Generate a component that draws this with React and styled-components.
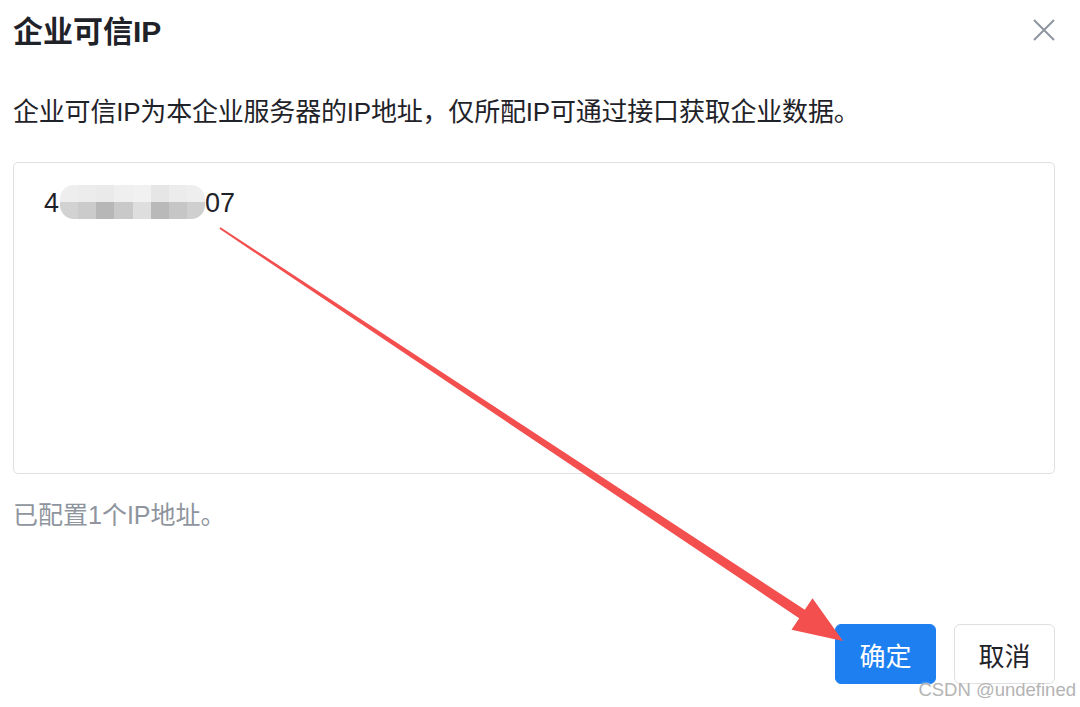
import React from 'react'
import styled, { createGlobalStyle } from 'styled-components'

const GlobalStyle = createGlobalStyle`
    html, body {
        margin: 0;
        padding: 0;
        background: #fff;
    }
    body {
        font-family: "Liberation Sans", "Noto Sans CJK SC", sans-serif;
        color: #1f2329;
    }
`

const Dialog = styled.div`
    position: relative;
    width: 1080px;
    height: 707px;
    box-sizing: border-box;
    padding: 12px 25px 0 13px;
    display: flex;
    flex-direction: column;
    overflow: hidden;
`

const Header = styled.div`
    display: flex;
    align-items: center;
    justify-content: space-between;
    height: 40px;
`

const Title = styled.h1`
    margin: 0;
    font-size: 30px;
    line-height: 40px;
    font-weight: 700;
    color: #1f2329;
`

const CloseButton = styled.button`
    border: 0;
    background: none;
    padding: 0;
    width: 24px;
    height: 24px;
    margin-right: -1px;
    margin-top: -4px;
    color: #8f959e;
    display: flex;
    align-items: center;
    justify-content: center;
`

const Desc = styled.p`
    margin: 42px 0 0;
    font-size: 26px;
    line-height: 36px;
    color: #1f2329;
    letter-spacing: -0.2px;
`

const IpBox = styled.div`
    margin-top: 32px;
    height: 312px;
    box-sizing: border-box;
    border: 1.5px solid #dee0e3;
    border-radius: 5px;
    padding: 20px 30px;
    font-family: "Liberation Sans", Arial, sans-serif;
    font-size: 27px;
    line-height: 40px;
    color: #1f2329;
    display: flex;
    align-items: flex-start;
`

const Mosaic = styled.span`
    display: inline-grid;
    grid-template-columns: repeat(8, 1fr);
    grid-template-rows: 1fr 1fr;
    width: 145px;
    height: 34px;
    margin: 2px 0 0 1px;
    border-radius: 14px;
    overflow: hidden;
    filter: blur(0.6px);
`

const Cell = styled.span`
    background: ${p => p.$c};
`

const Hint = styled.p`
    margin: 23px 0 0;
    font-size: 25px;
    line-height: 36px;
    color: #8f959e;
`

const Footer = styled.div`
    margin-top: 91px;
    display: flex;
    justify-content: flex-end;
    gap: 18px;
`

const Button = styled.button`
    width: 101px;
    height: 60px;
    box-sizing: border-box;
    border-radius: 6px;
    font-family: "Noto Sans CJK SC", sans-serif;
    font-size: 26px;
    border: 1.5px solid ${p => (p.$primary ? '#1e80f0' : '#dee0e3')};
    background: ${p => (p.$primary ? '#1e80f0' : '#fff')};
    color: ${p => (p.$primary ? '#fff' : '#1f2329')};
    padding: 0;
`

const Overlay = styled.svg`
    position: absolute;
    top: 0;
    left: 0;
    pointer-events: none;
`

const Watermark = styled.span`
    position: absolute;
    right: 4px;
    bottom: 6px;
    font-family: "Liberation Sans", Arial, sans-serif;
    font-size: 18.5px;
    color: #b4b4b4;
    text-shadow: 0 0 2px #fff;
`

const topRow = ['#eeeeee', '#ececec', '#eaeaea', '#efefef', '#f1f1f1', '#e6e6e6', '#ececec', '#eeeeee']
const bottomRow = ['#d2d2d2', '#cbcbcb', '#b7b7b7', '#c9c9c9', '#dedede', '#b9b9b9', '#c6c6c6', '#cfcfcf']

const App = () => {
    return (
        <>
            <GlobalStyle />
            <Dialog>
                <Header>
                    <Title>企业可信IP</Title>
                    <CloseButton>
                        <svg width="24" height="24" viewBox="0 0 24 24">
                            <path d="M2 2 L22 22 M22 2 L2 22" stroke="currentColor" strokeWidth="2" />
                        </svg>
                    </CloseButton>
                </Header>
                <Desc>企业可信IP为本企业服务器的IP地址，仅所配IP可通过接口获取企业数据。</Desc>
                <IpBox>
                    4
                    <Mosaic>
                        {topRow.map((c, i) => <Cell key={'t' + i} $c={c} />)}
                        {bottomRow.map((c, i) => <Cell key={'b' + i} $c={c} />)}
                    </Mosaic>
                    07
                </IpBox>
                <Hint>已配置1个IP地址。</Hint>
                <Footer>
                    <Button $primary>确定</Button>
                    <Button>取消</Button>
                </Footer>
                <Overlay width="1080" height="707" viewBox="0 0 1080 707">
                    <polygon
                        fill="#f44f4f"
                        points="220.5,227.2 804.8,609.8 812.5,598.2 843,641 791.5,629.8 799.2,618.2 219.4,228.8"
                    />
                </Overlay>
                <Watermark>CSDN @undefined</Watermark>
            </Dialog>
        </>
    )
}

export default App
